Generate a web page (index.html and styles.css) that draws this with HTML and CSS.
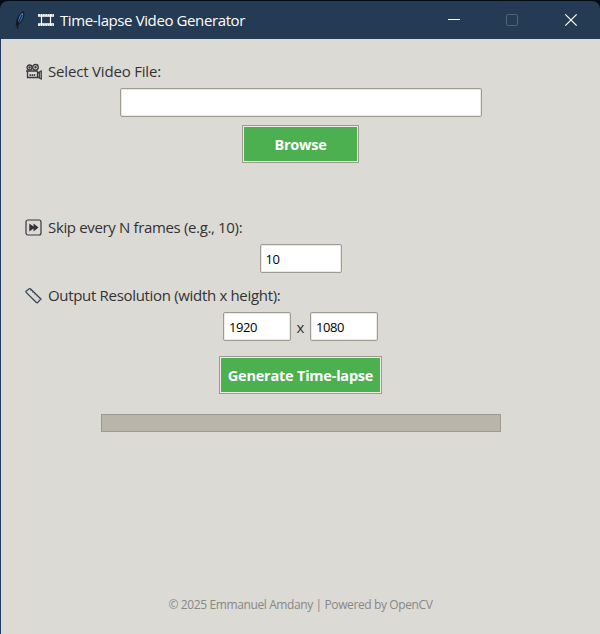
FILE: index.html
```html
<!DOCTYPE html>
<html lang="en">
<head>
<meta charset="utf-8">
<title>Time-lapse Video Generator</title>
<link rel="stylesheet" href="styles.css">
</head>
<body>
<div class="window">
  <header class="titlebar">
    <svg class="feather" width="12" height="20" viewBox="0 0 12 20"><path d="M2 17C1 11 4 4 9.5 1C12 5 9 12 3 16Z" fill="#141b25"/><path d="M4 13C4 8 6 4 9 2.5C10 6 8 9.5 5 13Z" fill="#4279bd"/><path d="M3.5 19L4.2 13L8 5" fill="none" stroke="#10151c" stroke-width="1"/></svg>
    <svg class="film" width="16" height="14" viewBox="0 0 16 14"><path d="M0 2h16M0 12h16" stroke="#e8ebef" stroke-width="2" stroke-dasharray="2 .4"/><path d="M0 3.2h16M0 10.8h16M3.5 1v12M12.5 1v12" stroke="#fff" stroke-width="1.2"/></svg>
    <span class="title">Time-lapse Video Generator</span>
    <svg class="controls" width="132" height="14" viewBox="0 0 132 14"><path d="M0 6.5h12" stroke="#fff"/><rect x="58.5" y="1.5" width="11" height="11" rx="1" fill="none" stroke="#536478"/><path d="M117.3 1.3l11.4 11.4M128.7 1.3l-11.4 11.4" stroke="#fff" stroke-width="1.2"/></svg>
  </header>
  <main class="content">
    <div class="label">
      <svg class="icon" width="18" height="18" viewBox="0 0 18 18" fill="none" stroke="#39383c" stroke-width="1.3"><circle cx="4.5" cy="4.5" r="2.5"/><circle cx="10.5" cy="4.3" r="2.8"/><circle cx="4.5" cy="4.5" r=".6"/><circle cx="10.5" cy="4.3" r=".6"/><path d="M1 8h11.5M2.5 8v6.5h10V8M12.5 10l3.7-2v8l-3.7-2M14.3 9.3v5.6"/><path d="M4.5 12.2h6" stroke-width="1.8" stroke-dasharray="1.5 .6"/></svg>
      <span class="t-select">Select Video File:</span>
    </div>
    <input class="entry entry-file" type="text" aria-label="Video file">
    <button class="button button-browse"><span>Browse</span></button>
    <div class="label label-skip">
      <svg class="icon" width="18" height="18" viewBox="0 0 18 18"><rect x="1" y="1" width="15" height="15" rx="2" fill="none" stroke="#39383c" stroke-width="1.2"/><path d="M4.3 4.4l4.2 3V4.4l5 4.1-5 4.1V9.6l-4.2 3z" fill="#333236"/></svg>
      <span class="t-skip">Skip every N frames (e.g., 10):</span>
    </div>
    <input class="entry entry-skip" type="text" value="10" aria-label="Frames to skip">
    <div class="label label-output">
      <svg class="icon" width="18" height="18" viewBox="0 0 18 18" fill="none" stroke="#3a4558" stroke-width="1.3"><path d="M1 4.2L4.2 1.8Q5 1.4 5.6 2L16 12L12.6 15.6Q12 16 11.4 15.5L1.2 5.4Q.7 4.8 1 4.2Z"/><path d="M5 3.6l.9-.8M7.2 5.7l.9-.8M9.4 7.8l.9-.8M11.6 9.9l.9-.8M13.6 11.9l.9-.8" stroke-width=".7"/></svg>
      <span class="t-output">Output Resolution (width x height):</span>
    </div>
    <div class="resolution">
      <input class="entry entry-size" type="text" value="1920" aria-label="Width">
      <span class="times">x</span>
      <input class="entry entry-size" type="text" value="1080" aria-label="Height">
    </div>
    <button class="button button-generate"><span>Generate Time-lapse</span></button>
    <div class="progress"></div>
    <footer class="footer"><span>© 2025 Emmanuel Amdany | Powered by OpenCV</span></footer>
  </main>
</div>
</body>
</html>
```
FILE: styles.css
```css
* { box-sizing: border-box; }
body { margin: 0; background: #050b13; font-family: "Open Sans", "Noto Sans", sans-serif; }
.window {
  height: 634px;
  padding-top: 1px;
  display: flex;
  flex-direction: column;
}
.titlebar {
  height: 38px;
  flex: none;
  display: flex;
  align-items: center;
  padding: 0 20px 0 14px;
  background: #253a53;
  border-radius: 8px 8px 0 0;
  color: #fff;
  font-size: 15px;
}
.film { margin-left: 12px; }
.title { margin-left: 6px; letter-spacing: -0.39px; white-space: nowrap; }
.controls { margin-left: auto; }
.content {
  flex: 1;
  display: flex;
  flex-direction: column;
  align-items: center;
  border-left: 1px solid #203a60;
  background: #dcdad5;
  color: #333;
  padding-top: 21px;
}
.label {
  align-self: stretch;
  height: 22px;
  margin-bottom: 6px;
  padding-left: 24px;
  display: flex;
  align-items: center;
  font-size: 15px;
  white-space: nowrap;
}
.label span { margin-left: 5px; }
.t-select { letter-spacing: -0.18px; }
.t-skip { letter-spacing: -0.35px; }
.t-output { letter-spacing: -0.32px; }
.icon { flex: none; position: relative; top: 1px; }
.entry {
  height: 29px;
  margin: 0;
  padding: 1px 5px 0;
  border: 1px solid #9e9a91;
  border-radius: 2px;
  box-shadow: inset 0 0 0 1px #eeebe7;
  background: #fff;
  color: #000;
  font: 13px "Open Sans", "Noto Sans", sans-serif;
  letter-spacing: -0.4px;
  outline: none;
}
.entry-file { width: 362px; }
.entry-skip { width: 82px; }
.entry-size { width: 68px; }
.button {
  height: 38px;
  margin: 0;
  padding: 0;
  border: 1px solid #9e9a91;
  background: #4caf50;
  box-shadow: inset 0 0 0 1px #eeebe7;
  color: #fff;
  font: bold 14.5px "Open Sans", "Noto Sans", sans-serif;
  letter-spacing: -0.22px;
  white-space: nowrap;
}
.button-browse { width: 117px; margin-top: 8px; }
.button-generate { width: 163px; margin-top: 15px; }
.label-skip { margin-top: 53px; }
.label-output { margin-top: 11px; }
.resolution { display: flex; align-items: center; }
.times { width: 19px; text-align: center; font-size: 15px; }
.progress {
  width: 400px;
  height: 18px;
  margin-top: 20px;
  border: 1px solid #9e9a91;
  background: #bab5ab;
}
.footer {
  margin-top: auto;
  margin-bottom: 20px;
  height: 18px;
  line-height: 18px;
  color: #888;
  font-size: 12px;
  letter-spacing: -0.39px;
  white-space: nowrap;
}
```
